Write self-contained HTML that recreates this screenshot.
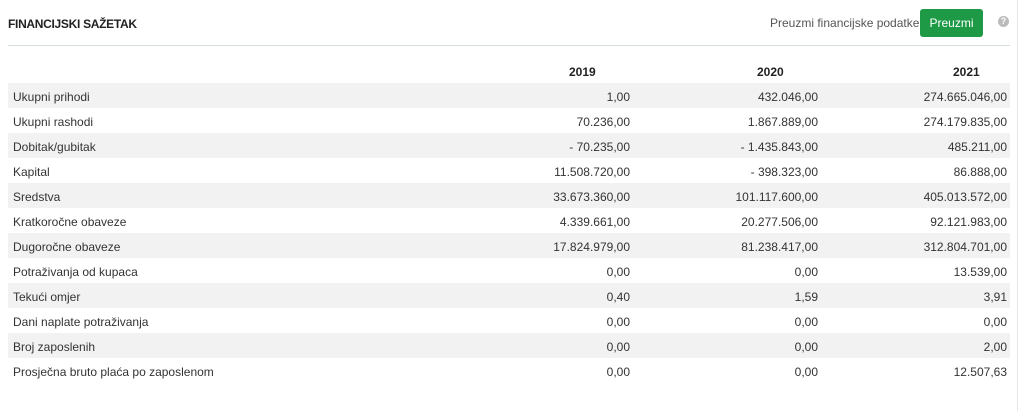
<!DOCTYPE html>
<html><head><style>
body{margin:0;width:1024px;height:411px;background:#fff;font-family:"Liberation Sans",sans-serif;color:#333;position:relative;overflow:hidden}
.rb{position:absolute;left:1017px;top:0;width:1px;height:411px;background:#e6e6e6}
.t{position:absolute;left:8px;top:17px;font-size:12px;font-weight:bold;color:#222;letter-spacing:-0.3px}
.hl{position:absolute;left:8px;top:45px;width:1002px;height:1px;background:#d5dde0}
.pl{position:absolute;left:770px;top:16px;font-size:12px;color:#555}
.btn{position:absolute;left:920px;top:9px;width:63px;height:28px;background:#1e9a47;border-radius:3px;color:#fff;font-size:12px;line-height:28px;text-align:center}
.q{position:absolute;left:998px;top:16px;width:11px;height:11px;border-radius:50%;background:#bbb;color:#fff;font-size:9px;font-weight:bold;line-height:11px;text-align:center}
.row{position:absolute;left:8px;width:1002px;height:25px;font-size:12px;line-height:25px}
.row.s{background:#f2f2f2}
.row span{position:absolute;top:2px}
.l{left:5px}
.a{right:380px}.b{right:192px}.c{right:3px}
.h{font-weight:bold;color:#222}
</style></head><body>
<div class="rb"></div>
<div class="t">FINANCIJSKI SAŽETAK</div>
<div class="pl">Preuzmi financijske podatke</div>
<div class="btn">Preuzmi</div>
<div class="q">?</div>
<div class="hl"></div>
<div class="row h" style="top:58px"><span style="left:561px">2019</span><span style="left:749px">2020</span><span style="left:945px">2021</span></div>
<div class="row s" style="top:83px"><span class="l">Ukupni prihodi</span><span class="a">1,00</span><span class="b">432.046,00</span><span class="c">274.665.046,00</span></div>
<div class="row" style="top:108px"><span class="l">Ukupni rashodi</span><span class="a">70.236,00</span><span class="b">1.867.889,00</span><span class="c">274.179.835,00</span></div>
<div class="row s" style="top:133px"><span class="l">Dobitak/gubitak</span><span class="a">- 70.235,00</span><span class="b">- 1.435.843,00</span><span class="c">485.211,00</span></div>
<div class="row" style="top:158px"><span class="l">Kapital</span><span class="a">11.508.720,00</span><span class="b">- 398.323,00</span><span class="c">86.888,00</span></div>
<div class="row s" style="top:183px"><span class="l">Sredstva</span><span class="a">33.673.360,00</span><span class="b">101.117.600,00</span><span class="c">405.013.572,00</span></div>
<div class="row" style="top:208px"><span class="l">Kratkoročne obaveze</span><span class="a">4.339.661,00</span><span class="b">20.277.506,00</span><span class="c">92.121.983,00</span></div>
<div class="row s" style="top:233px"><span class="l">Dugoročne obaveze</span><span class="a">17.824.979,00</span><span class="b">81.238.417,00</span><span class="c">312.804.701,00</span></div>
<div class="row" style="top:258px"><span class="l">Potraživanja od kupaca</span><span class="a">0,00</span><span class="b">0,00</span><span class="c">13.539,00</span></div>
<div class="row s" style="top:283px"><span class="l">Tekući omjer</span><span class="a">0,40</span><span class="b">1,59</span><span class="c">3,91</span></div>
<div class="row" style="top:308px"><span class="l">Dani naplate potraživanja</span><span class="a">0,00</span><span class="b">0,00</span><span class="c">0,00</span></div>
<div class="row s" style="top:333px"><span class="l">Broj zaposlenih</span><span class="a">0,00</span><span class="b">0,00</span><span class="c">2,00</span></div>
<div class="row" style="top:358px"><span class="l">Prosječna bruto plaća po zaposlenom</span><span class="a">0,00</span><span class="b">0,00</span><span class="c">12.507,63</span></div>
</body></html>
